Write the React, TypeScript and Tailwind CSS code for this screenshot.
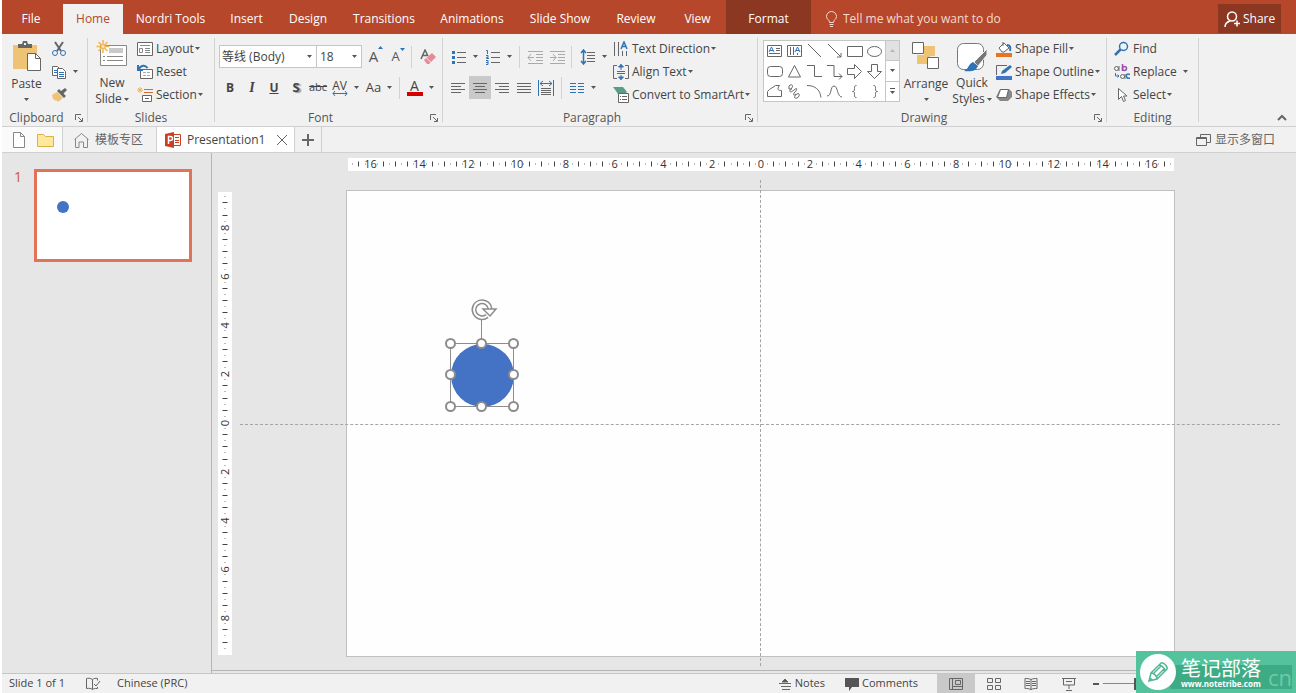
import type { ReactNode } from "react";

const tabs = [
  { name: "File", style: "w-[58px] mr-[3px] text-white" },
  { name: "Home", style: "w-[60px] bg-[#f1f1f1] text-[#b7472a]" },
  { name: "Nordri Tools", style: "w-[95px] text-white" },
  { name: "Insert", style: "w-[57px] text-white" },
  { name: "Design", style: "w-[66px] text-white" },
  { name: "Transitions", style: "w-[86px] text-white" },
  { name: "Animations", style: "w-[90px] text-white" },
  { name: "Slide Show", style: "w-[86px] text-white" },
  { name: "Review", style: "w-[66px] text-white" },
  { name: "View", style: "w-[57px] text-white" },
];

function Icon({ w = 16, h = 16, children }: { w?: number; h?: number; children: ReactNode }) {
  return (
    <svg
      width={w}
      height={h}
      viewBox={`0 0 ${w} ${h}`}
      fill="none"
      stroke="#666"
      className="shrink-0"
      aria-hidden="true"
    >
      {children}
    </svg>
  );
}

function Caret() {
  return (
    <svg width="5" height="3" viewBox="0 0 5 3" className="shrink-0 fill-[#555]" aria-hidden="true">
      <path d="M0 0h5L2.500 3z" />
    </svg>
  );
}

function Launcher({ label }: { label: string }) {
  return (
    <button type="button" aria-label={label} className="flex w-4 justify-center">
      <Icon w={8} h={8}>
        <path d="M.5 6V.5H6M3 3l4 4M7.500 4v3.500H4" />
      </Icon>
    </button>
  );
}

function Group({
  name,
  width,
  launcher = false,
  children,
}: {
  name: string;
  width: string;
  launcher?: boolean;
  children: ReactNode;
}) {
  return (
    <section aria-label={name} className={`flex shrink-0 ${width}`}>
      <div className="flex min-w-0 flex-1 flex-col">
        <div className="flex h-[76px] pt-[3px]">{children}</div>
        <div className="flex h-4 items-center">
          <span className="flex-1 text-center text-[#555]">{name}</span>
          {launcher && <Launcher label={`${name} settings`} />}
        </div>
      </div>
      <div className="my-1 w-px bg-[#d2d2d2]" />
    </section>
  );
}

function Row({ icon, label, menu = false }: { icon: ReactNode; label: string; menu?: boolean }) {
  return (
    <button type="button" className="flex h-[23px] items-center gap-[3px] whitespace-nowrap">
      {icon}
      <span className="flex items-center gap-px">
        {label}
        {menu && <Caret />}
      </span>
    </button>
  );
}

function Tool({
  label,
  width = "w-[22px]",
  active = false,
  children,
}: {
  label: string;
  width?: string;
  active?: boolean;
  children: ReactNode;
}) {
  return (
    <button
      type="button"
      aria-label={label}
      className={`flex h-[23px] shrink-0 items-center justify-center gap-1.5 ${width} ${active ? "bg-[#c9c9c9]" : ""}`}
    >
      {children}
    </button>
  );
}

function Divider() {
  return <div className="h-[22px] w-px shrink-0 bg-[#d2d2d2]" />;
}

function Lines({ rows }: { rows: number[][] }) {
  return (
    <Icon>
      {rows.map(([a, b], i) => (
        <path key={i} d={`M${a} ${3.5 + i * 3}H${b}`} />
      ))}
    </Icon>
  );
}

function Clipboard() {
  return (
    <Group name="Clipboard" width="w-[86px]" launcher>
      <button type="button" className="flex w-[49px] flex-col items-center pt-1">
        <Icon w={30} h={32}>
          <path d="M1 4h24v24H1z" fill="#eec373" stroke="none" />
          <path d="M6 3h4l1-3h4l1 3h4v4H6z" fill="#666" stroke="none" />
          <path d="M12 2h2v2h-2z" fill="#f1f1f1" stroke="none" />
          <path d="M15.500 12.500h8l5 5v12h-13z" fill="#fff" />
          <path d="M23.500 12.500v5h5" />
        </Icon>
        <span className="mt-[3px] leading-[16px]">Paste</span>
        <span className="mt-1.5"><Caret /></span>
      </button>
      <div className="flex flex-col">
        <Tool label="Cut" width="w-4">
          <Icon>
            <path d="M4 1l6 9M12 1L6 10" strokeWidth="2" />
            <circle cx="4" cy="12" r="2.500" stroke="#2f73b5" />
            <circle cx="12" cy="12" r="2.500" stroke="#2f73b5" />
          </Icon>
        </Tool>
        <Tool label="Copy" width="w-[27px]">
          <Icon>
            <path d="M1.500 2.500h5l3 3v6h-8z" fill="#fff" />
            <path d="M3 6.500h3M3 8.500h3" stroke="#2f73b5" />
            <path d="M6.500 4.500h5l3 3v7h-8z" fill="#fff" />
            <path d="M8 8.500h5M8 10.500h5M8 12.500h5" stroke="#2f73b5" />
          </Icon>
          <Caret />
        </Tool>
        <Tool label="Format painter" width="w-4">
          <Icon>
            <path d="M1 8l5-3 6 6-5 4-2-2-1 1-1-2-1 0z" fill="#eec373" stroke="none" />
            <path d="M6 4l7 7 2-2-2.500-2.500L16 3l-2-2-4 3-2-2z" fill="#666" stroke="none" />
          </Icon>
        </Tool>
      </div>
    </Group>
  );
}

function Slides() {
  return (
    <Group name="Slides" width="w-[127px]">
      <button type="button" className="flex w-12 flex-col items-center pt-[3px]">
        <Icon w={32} h={32}>
          <path d="M4.500 5.500h26v20h-26z" fill="#fff" stroke="#888" />
          <path d="M13 8h14v5H13z" fill="#c9c9c9" stroke="none" />
          <path d="M7 16.500h2m2 0h16M7 20.500h2m2 0h16" stroke="#888" />
          <path d="M7 0v13M.5 6.500h13M2.500 2l9 9M11.500 2l-9 9" stroke="#f0b654" strokeWidth="1.500" />
          <circle cx="7" cy="6.500" r="2" fill="#f9e3b8" stroke="#f0b654" />
        </Icon>
        <span className="mt-[3px] leading-[16px]">New</span>
        <span className="flex items-center gap-0.5 leading-[16px]">Slide <Caret /></span>
      </button>
      <div className="ml-px flex flex-col">
        <Row
          label="Layout"
          menu
          icon={
            <Icon>
              <path d="M.5 1.500h15v13H.5z" fill="#fff" />
              <path d="M3 4.500h10M8 7.500h5M8 9.500h5M8 11.500h5M2.500 7.500h3v4h-3z" stroke="#888" />
            </Icon>
          }
        />
        <Row
          label="Reset"
          icon={
            <Icon>
              <path d="M3.500 5.500h12v9h-12z" fill="#fff" />
              <path d="M6 8.500h3M10 8.500h3M6 11.500h3M10 11.500h3" stroke="#aaa" />
              <path d="M1 1v5h5M1.500 5.500C4 1 8 .5 10.500 4" stroke="#2f73b5" strokeWidth="2" />
            </Icon>
          }
        />
        <Row
          label="Section"
          menu
          icon={
            <Icon>
              <path d="M3 0v6M0 3h6M1 1l4 4M5 1L1 5" stroke="#f0b654" />
              <path d="M7 2.500h9M7 5.500h9" stroke="#d06b3c" />
              <path d="M5.500 8.500h9v6h-9zM8 11.500h4" fill="#fff" />
            </Icon>
          }
        />
      </div>
    </Group>
  );
}

function FontGroup() {
  return (
    <Group name="Font" width="w-[228px]" launcher>
      <div className="flex flex-1 flex-col pl-1 pt-2">
        <div className="flex items-center">
          <div className="flex h-[23px] w-[98px] items-center border border-[#c6c6c6] bg-white pr-1">
            <input aria-label="Font name" defaultValue="等线 (Body)" className="w-0 flex-1 pl-0.5 outline-none" />
            <Caret />
          </div>
          <div className="-ml-px flex h-[23px] w-[46px] items-center border border-[#c6c6c6] bg-white pr-1">
            <input aria-label="Font size" defaultValue="18" className="w-0 flex-1 pl-[3px] outline-none" />
            <Caret />
          </div>
          <Tool label="Increase font size" width="ml-[3px] w-[22px]">
            <span className="flex text-[15px] text-[#555]">A<Icon w={5} h={5}><path d="M0 4h5L2.500 1z" fill="#2f73b5" stroke="none" /></Icon></span>
          </Tool>
          <Tool label="Decrease font size">
            <span className="flex text-[13px] text-[#555]">A<Icon w={5} h={5}><path d="M0 1h5L2.500 4z" fill="#2f73b5" stroke="none" /></Icon></span>
          </Tool>
          <div className="ml-[2px]"><Divider /></div>
          <Tool label="Clear formatting" width="ml-[5px] w-[22px]">
            <Icon>
              <path d="M1 10L5 1l3 6M2.500 6.500h5" strokeWidth="1.500" />
              <path d="M4 11l8-7 4 4-7 7H7z" fill="#e58b98" stroke="none" />
              <path d="M6.500 9l4.500 4.500" stroke="#f1f1f1" />
            </Icon>
          </Tool>
        </div>
        <div className="mt-2 flex items-center text-[#444]">
          <Tool label="Bold"><b>B</b></Tool>
          <Tool label="Italic"><i className="font-['Liberation_Serif'] text-[14px] font-bold">I</i></Tool>
          <Tool label="Underline"><b className="underline">U</b></Tool>
          <Tool label="Shadow"><b className="text-[13px] [text-shadow:2px_1px_1px_#999]">S</b></Tool>
          <Tool label="Strikethrough"><s className="text-[11px]">abc</s></Tool>
          <Tool label="Character spacing" width="w-[32px]">
            <span className="flex flex-col items-center leading-[11px]">
              AV
              <Icon w={16} h={5}><path d="M1 2.500h14M3 0L1 2.500 3 5M13 0l2 2.500L13 5" stroke="#2f73b5" /></Icon>
            </span>
            <Caret />
          </Tool>
          <Tool label="Change case" width="w-[36px]">
            <span className="text-[13px]">Aa</span>
            <Caret />
          </Tool>
          <div className="ml-[2px]"><Divider /></div>
          <Tool label="Font color" width="ml-[5px] w-[30px]">
            <span className="flex w-4 flex-col items-center text-[14px] leading-[13px]">
              A<span className="h-1 w-4 bg-[#d40000]" />
            </span>
            <Caret />
          </Tool>
        </div>
      </div>
    </Group>
  );
}

function Paragraph() {
  return (
    <Group name="Paragraph" width="w-[315px]" launcher>
      <div className="flex w-[168px] flex-col pl-1 pt-2">
        <div className="flex items-center">
          <Tool label="Bullets" width="w-[34px]">
            <Icon>
              <path d="M6 3.500h9M6 8.500h9M6 13.500h9" />
              <path d="M1 2h3v3H1zM1 7h3v3H1zM1 12h3v3H1z" fill="#2f73b5" stroke="none" />
            </Icon>
            <Caret />
          </Tool>
          <Tool label="Numbering" width="w-[34px]">
            <Icon>
              <path d="M6 3.500h9M6 8.500h9M6 13.500h9" />
              <path d="M1 1.500h1.500V5M1 6.500h2v2H1.500v1H4M1 11.500h2v4H1M1 13.500h2" stroke="#2f73b5" />
            </Icon>
            <Caret />
          </Tool>
          <div className="ml-1"><Divider /></div>
          <Tool label="Decrease indent" width="ml-1 w-[22px]">
            <Icon>
              <path d="M1 2.500h15M9 5.500h7M9 8.500h7M9 11.500h7M1 14.500h15M1 8.500h6M4 5L1 8.500 4 12" stroke="#aaa" />
            </Icon>
          </Tool>
          <Tool label="Increase indent">
            <Icon>
              <path d="M1 2.500h15M9 5.500h7M9 8.500h7M9 11.500h7M1 14.500h15M1 8.500h6M4 5l3 3.500L4 12" stroke="#aaa" />
            </Icon>
          </Tool>
          <div className="ml-[3px]"><Divider /></div>
          <Tool label="Line spacing" width="ml-1 w-[34px]">
            <Icon>
              <path d="M7 3.500h8M7 6.500h8M7 9.500h8M7 12.500h8" />
              <path d="M3.500 1v14M1 4l2.500-3L6 4M1 12l2.500 3L6 12" stroke="#2f73b5" strokeWidth="1.500" />
            </Icon>
            <Caret />
          </Tool>
        </div>
        <div className="mt-2 flex items-center">
          <Tool label="Align left"><Lines rows={[[1, 15], [1, 11], [1, 15], [1, 11]]} /></Tool>
          <Tool label="Center" active><Lines rows={[[1, 15], [3, 13], [1, 15], [3, 13]]} /></Tool>
          <Tool label="Align right"><Lines rows={[[1, 15], [5, 15], [1, 15], [5, 15]]} /></Tool>
          <Tool label="Justify"><Lines rows={[[1, 15], [1, 15], [1, 15], [1, 15]]} /></Tool>
          <Tool label="Distribute">
            <Icon>
              <path d="M.5 0v16M15.500 0v16M2 3.500h12M5 1L2 3.500 5 6M11 1l3 2.500L11 6" stroke="#2f73b5" />
              <path d="M3 8.500h10M3 10.500h10M3 12.500h10M3 14.500h10" />
            </Icon>
          </Tool>
          <div className="ml-1"><Divider /></div>
          <Tool label="Columns" width="ml-[3px] w-[34px]">
            <Icon>
              <path d="M1 3.500h6M9 3.500h6M1 6.500h6M9 6.500h6M1 9.500h6M9 9.500h6M1 12.500h6M9 12.500h6" stroke="#2f73b5" />
            </Icon>
            <Caret />
          </Tool>
        </div>
      </div>
      <div className="ml-[2px] flex flex-col">
        <Row
          label="Text Direction"
          menu
          icon={
            <Icon>
              <path d="M1.500 1v14M5.500 1v14M9.500 10v5M13.500 10v5" />
              <path d="M8 8l3-7 3 7M9 5.500h4" stroke="#2f73b5" strokeWidth="1.500" />
            </Icon>
          }
        />
        <Row
          label="Align Text"
          menu
          icon={
            <Icon>
              <path d="M4 1.500H.5v13H4M12 1.500h3.500v13H12M4 7.500h8M4 9.500h8" />
              <path d="M8 0v6M5.500 3L8 .5 10.500 3zM8 11v5M5.500 13L8 15.500 10.500 13z" stroke="#2f73b5" fill="#2f73b5" />
            </Icon>
          }
        />
        <Row
          label="Convert to SmartArt"
          menu
          icon={
            <Icon>
              <path d="M0 0h10l4 5-2 2H5L3 4z" fill="#569f86" stroke="none" />
              <path d="M5.500 6.500h10v9h-10z" fill="#fff" />
              <path d="M7 9.500h1M7 12.500h1M9 9.500h5M9 12.500h5" />
            </Icon>
          }
        />
      </div>
    </Group>
  );
}

const shapes: { name: string; art: ReactNode }[] = [
  { name: "Text box", art: <><path d="M1.500 2.500h14v11h-14zM10 5.500h4M10 7.500h4M3 10.500h11" /><path d="M3 9l2.500-5L8 9M4 7.500h3" stroke="#2f73b5" /></> },
  { name: "Vertical text box", art: <><path d="M1.500 2.500h14v11h-14zM4.500 4v8M7.500 4v8" /><path d="M9 9l2.500-5L14 9M10 7.500h3M11.500 10v2" stroke="#2f73b5" /></> },
  { name: "Line", art: <path d="M2 1l13 13" /> },
  { name: "Arrow", art: <path d="M2 1l13 13M15 10v4h-4" /> },
  { name: "Rectangle", art: <path d="M1.500 3.500h15v10h-15z" /> },
  { name: "Oval", art: <ellipse cx="8.500" cy="8.500" rx="7" ry="5" /> },
  { name: "Rounded rectangle", art: <rect x="1.500" y="3.500" width="15" height="10" rx="3" /> },
  { name: "Triangle", art: <path d="M8.500 2.500l6 11.500h-12z" /> },
  { name: "Elbow connector", art: <path d="M1 2.500h7.500v11H16" /> },
  { name: "Elbow arrow", art: <path d="M1 2.500h7v11h8M13 10.500l3 3-3 3" /> },
  { name: "Right arrow", art: <path d="M1.500 5.500h7v-4l7 7-7 7v-4h-7z" /> },
  { name: "Down arrow", art: <path d="M5.500 1.500v7h-4l7 7 7-7h-4v-7z" /> },
  { name: "Freeform", art: <path d="M3.500 6.500l6-4h4c-3 4-1 5 2 5v6h-14v-5z" /> },
  { name: "Scribble", art: <path d="M3 3c3-3 5 0 2 3s0 4 3 1 4-1 1 2-1 4 2 2 3 3 0 4-3-1-1-4M3 3v3h3" /> },
  { name: "Arc", art: <path d="M1 2.500c8 0 13 4 14 12" /> },
  { name: "Curve", art: <path d="M1 13c5 0 3-10 7-10s3 11 8 11" /> },
  { name: "Left brace", art: <path d="M10.500 2.500c-2 0-2 1-2 3s0 3-2 3c2 0 2 1 2 3s0 3 2 3" /> },
  { name: "Right brace", art: <path d="M7.500 2.500c2 0 2 1 2 3s0 3 2 3c-2 0-2 1-2 3s0 3-2 3" /> },
];

function Drawing() {
  return (
    <Group name="Drawing" width="w-[349px]" launcher>
      <div className="ml-[5px] mt-[3px] flex h-[62px] w-[137px] border border-[#c6c6c6] bg-white">
        <div className="grid flex-1 grid-cols-6 pr-px">
          {shapes.map((shape) => (
            <button key={shape.name} type="button" aria-label={shape.name} className="flex items-center justify-center">
              <Icon w={17} h={17}>{shape.art}</Icon>
            </button>
          ))}
        </div>
        <div className="flex w-[14px] flex-col divide-y divide-[#c6c6c6] border-l border-[#c6c6c6]">
          <button type="button" aria-label="Previous shapes" className="flex flex-1 items-center justify-center bg-[#e1e1e1]">
            <span className="rotate-180 opacity-30"><Caret /></span>
          </button>
          <button type="button" aria-label="Next shapes" className="flex flex-1 items-center justify-center"><Caret /></button>
          <button type="button" aria-label="All shapes" className="flex flex-1 flex-col items-center justify-center gap-0.5">
            <span className="h-px w-[5px] bg-[#555]" />
            <Caret />
          </button>
        </div>
      </div>
      <button type="button" className="ml-[3px] flex w-[46px] flex-col items-center pt-1">
        <Icon w={28} h={32}>
          <path d="M12 5h11v10h-5v8H5v-9h7z" fill="#eec373" stroke="none" />
          <path d="M.5 1.500h11v11H.5zM15.500 16.500h11v11h-11z" fill="#fff" />
        </Icon>
        <span className="mt-[3px] leading-[16px]">Arrange</span>
        <span className="mt-1.5"><Caret /></span>
      </button>
      <button type="button" className="ml-px flex w-[44px] flex-col items-center pt-1">
        <Icon w={32} h={32}>
          <rect x="1.500" y="2.500" width="26" height="26" rx="6" fill="#fff" stroke="#777" />
          <path d="M31 8v6l-9 11-4-4z" fill="#777" stroke="#f1f1f1" />
          <path d="M17 21l5 4c-2 5-7 6-14 5 5-2 4-7 9-9z" fill="#2f73b5" stroke="none" />
        </Icon>
        <span className="mt-0.5 leading-[16px]">Quick</span>
        <span className="flex items-center gap-0.5 leading-[16px]">Styles <Caret /></span>
      </button>
      <div className="ml-[2px] flex flex-col">
        <Row
          label="Shape Fill"
          menu
          icon={
            <Icon>
              <path d="M0 12h16v4H0z" fill="#e67424" stroke="none" />
              <path d="M3 7l5-5 5 5-5 4H6zM7 5V1" fill="#fff" />
              <path d="M11 4c3 0 4 2 3 6" stroke="#2f73b5" strokeWidth="2" />
            </Icon>
          }
        />
        <Row
          label="Shape Outline"
          menu
          icon={
            <Icon>
              <path d="M0 12h16v4H0z" fill="#4472c4" stroke="none" />
              <path d="M11 1.500H.5V11" />
              <path d="M5 10l1-3 8-6 2 2-7 6z" fill="#2f73b5" stroke="none" />
            </Icon>
          }
        />
        <Row
          label="Shape Effects"
          menu
          icon={
            <Icon>
              <path d="M4 2h9l3 3v5l-4 4H4l-4-4z" fill="#888" stroke="none" />
              <path d="M4.500 2.500h8l-2 8h-9z" fill="#fff" />
            </Icon>
          }
        />
      </div>
    </Group>
  );
}

function Editing() {
  return (
    <Group name="Editing" width="w-[92px]">
      <div className="ml-[7px] flex flex-1 flex-col">
        <Row
          label="Find"
          icon={
            <Icon>
              <circle cx="9.500" cy="5.500" r="4" stroke="#2f73b5" strokeWidth="1.500" />
              <path d="M6.500 8.500L1 14" stroke="#2f73b5" strokeWidth="2.500" />
            </Icon>
          }
        />
        <div className="flex items-center">
          <Row
            label="Replace"
            icon={
              <Icon>
                <circle cx="2.500" cy="4.500" r="2" />
                <path d="M5 2v5" />
                <path d="M8.500 0v7" stroke="#9b4fb5" strokeWidth="1.500" />
                <circle cx="10.500" cy="4.500" r="2" stroke="#9b4fb5" strokeWidth="1.500" />
                <path d="M1.500 9v3H5M3.500 10.500L5 12l-1.500 1.500" stroke="#2f73b5" />
                <circle cx="8.500" cy="12.500" r="2" />
                <path d="M11 10v5" />
                <path d="M16 10.500c-3-1-4 0-3.500 2s2 2 3.500 1.500" stroke="#2f73b5" strokeWidth="1.500" />
              </Icon>
            }
          />
          <button type="button" aria-label="Replace options" className="mr-2.5 ml-auto"><Caret /></button>
        </div>
        <Row
          label="Select"
          menu
          icon={
            <Icon>
              <path d="M4.500 1.500v11l3-3 2 5 2-1-2-4.500h3.500z" fill="#fff" />
            </Icon>
          }
        />
      </div>
    </Group>
  );
}

function DocumentTabs() {
  return (
    <nav aria-label="Open documents" className="flex h-[26px] shrink-0 items-center border-b border-[#d0d0d0] bg-[#f1f1f1] text-[#666]">
      <div className="flex h-full w-[61px] items-center gap-2.5 border-r border-[#d0d0d0] bg-[#fafafa] pl-[9px]">
        <button type="button" aria-label="New document">
          <Icon><path d="M2.500.5h7l4 4v11h-11zM9.500.5v4h4" fill="#fff" stroke="#888" /></Icon>
        </button>
        <button type="button" aria-label="Open folder">
          <Icon w={17}><path d="M.5 2.500h6l2 2h8v10H.5z" fill="#ffe79b" stroke="#d9b24a" /></Icon>
        </button>
      </div>
      <a href="#templates" className="flex h-full w-[94px] items-center gap-1.5 border-r border-[#d0d0d0] pl-2.5">
        <Icon><path d="M1.500 7.500l7-6 7 6M2.500 7v8.500h3.500v-5.500h4.500v5.500h4V7" stroke="#888" /></Icon>
        模板专区
      </a>
      <div className="flex h-full w-[138px] items-center border-r border-[#d0d0d0] bg-white pl-2">
        <Icon>
          <path d="M0 2l9-2v16l-9-2z" fill="#c8401f" stroke="none" />
          <path d="M9 2.500h6.500v11H9M10 5.500h4M10 8.500h4M10 10.500h4" stroke="#c8401f" />
          <path d="M3.500 12V4.500h2a2 2 0 010 4h-2" stroke="#fff" strokeWidth="1.500" />
        </Icon>
        <span className="ml-1.5 text-[#444]">Presentation1</span>
        <button type="button" aria-label="Close Presentation1" className="ml-auto mr-1.5">
          <Icon w={12} h={12}><path d="M1 1l10 10M11 1L1 11" /></Icon>
        </button>
      </div>
      <button type="button" aria-label="New tab" className="flex h-full w-[27px] items-center justify-center border-r border-[#d0d0d0]">
        <Icon w={12} h={12}><path d="M6 0v12M0 6h12" strokeWidth="2" /></Icon>
      </button>
      <button type="button" className="mr-[21px] ml-auto flex items-center gap-1">
        <Icon w={15}><path d="M4.500 5V2.500h10v8H11M.5 5.500h10v8H.5zM.5 6.500h10" /></Icon>
        显示多窗口
      </button>
    </nav>
  );
}

// half-centimetre ticks with dots between them, even numbers counted out from the middle
function Ruler({ length, origin, max }: { length: number; origin: number; max: number }) {
  const marks = [];
  for (let i = -max * 4; i <= max * 4; i++) {
    const at = origin + i * 6.1;
    if (at < 3 || at > length - 3) continue;
    if (i % 8 === 0) {
      marks.push(
        <text key={i} x={at} y="10" textAnchor="middle" fontSize="11" fill="#333">
          {Math.abs(i / 4)}
        </text>,
      );
    } else {
      const r = i % 2 === 0 ? 2.5 : 0.5;
      marks.push(<path key={i} d={`M${Math.round(at) + 0.5} ${6 - r}V${6 + r}`} stroke={i % 2 === 0 ? "#444" : "#777"} />);
    }
  }
  return (
    <svg width={length} height="13" className="shrink-0 bg-white" aria-hidden="true">
      {marks}
    </svg>
  );
}

function SelectedCircle() {
  const handles = [[6, 6], [37, 6], [69, 6], [6, 37], [69, 37], [6, 69], [37, 69], [69, 69]];
  return (
    <svg width="76" height="114" viewBox="0 -38 76 114" className="absolute left-[97px] top-[108px]" role="img" aria-label="Selected circle">
      <circle cx="38.500" cy="38.500" r="31.500" fill="#4472c4" />
      <path d="M6.500 6.500h63v63h-63zM37.500 6V-20" fill="none" stroke="#8c8c8c" />
      {handles.map(([x, y]) => (
        <circle key={`${x}-${y}`} cx={x + 0.5} cy={y + 0.5} r="4.500" fill="#fff" stroke="#8c8c8c" strokeWidth="2" />
      ))}
      <path d="M46-28a8 8 0 10-3 7" fill="none" stroke="#8c8c8c" strokeWidth="5" />
      <path d="M46-28a8 8 0 10-3 7" fill="none" stroke="#fff" strokeWidth="2" />
      <path d="M39-28h13l-6 7z" fill="#fff" stroke="#8c8c8c" strokeWidth="1.500" />
    </svg>
  );
}

function Workspace() {
  return (
    <main className="flex min-h-0 flex-1 bg-[#e6e6e6]">
      <aside className="flex w-[210px] shrink-0 gap-3 border-r border-[#b5b5b5] pl-3 pt-4">
        <span className="w-2 text-[14px] leading-[16px] text-[#d2553a]">1</span>
        <button type="button" aria-label="Slide 1" className="flex h-[93px] w-[158px] items-start border-[3px] border-[#e0735a] bg-white pt-[29px] pl-5">
          <span className="size-3 rounded-full bg-[#4472c4]" />
        </button>
      </aside>
      <div className="mb-[2px] flex flex-1 border-b border-[#b5b5b5] pl-1.5">
        <div className="flex w-[14px] items-start pt-[39px]">
          <div className="flex h-[463px] w-[14px] items-center justify-center bg-white">
            <div className="shrink-0 -rotate-90"><Ruler length={463} origin={232} max={10} /></div>
          </div>
        </div>
        <div className="relative mr-[7px] flex flex-1 flex-col items-center pt-[5px]">
          <Ruler length={826} origin={413} max={17} />
          <div className="relative mt-[19px] h-[467px] w-[829px] border border-[#c0c0c0] bg-[#fefefe]">
            <SelectedCircle />
          </div>
          <div className="absolute bottom-[4px] top-[27px] left-1/2 -ml-px border-l border-dashed border-[#a5a5a5]" />
          <div className="absolute top-[271px] right-[9px] left-2 border-t border-dashed border-[#a5a5a5]" />
        </div>
      </div>
    </main>
  );
}

function StatusBar() {
  return (
    <footer className="flex h-5 shrink-0 items-center border-t border-[#c6c6c6] bg-[#f1f1f1] text-[11px]">
      <span className="ml-[7px]">Slide 1 of 1</span>
      <button type="button" aria-label="Spelling" className="ml-5">
        <Icon><path d="M7.500 3.500C5.500 2 3 2 1.500 2.500v10c3-.5 4.500 0 6 1 1-1 2-1 5-1V11M7.500 3.500v10M7.500 3.500c1-1 3-1.500 5-1v2M9 8l2 2 4-5" /></Icon>
      </button>
      <span className="ml-4">Chinese (PRC)</span>
      <div className="ml-auto mr-40 flex h-full items-center">
        <button type="button" className="flex items-center gap-1">
          <Icon w={12} h={12}><path d="M3 4l3-3 3 3zM0 5.500h12M2 8.500h10M3 11.500h8" fill="#555" /></Icon>
          Notes
        </button>
        <button type="button" className="ml-5 flex items-center gap-[3px]">
          <Icon w={14} h={14}><path d="M0 1h14v9H7l-3 4v-4H0z" fill="#555" stroke="none" /></Icon>
          Comments
        </button>
        <button type="button" aria-label="Normal view" className="ml-[19px] flex h-full w-[38px] items-center justify-center bg-[#c9c9c9]">
          <Icon><path d="M1.500 2.500h13v11h-13zM4.500 3v10M7.500 4.500h5v4h-5zM5 10.500h9" /></Icon>
        </button>
        <button type="button" aria-label="Slide sorter" className="ml-[11px]">
          <Icon><path d="M1.500 2.500h5v4h-5zM9.500 2.500h5v4h-5zM1.500 9.500h5v4h-5zM9.500 9.500h5v4h-5z" /></Icon>
        </button>
        <button type="button" aria-label="Reading view" className="ml-[21px]">
          <Icon><path d="M8 3.500c-2-1-4-1-6-1v10c2 0 4 0 6 1 2-1 4-1 6-1v-10c-2 0-4 0-6 1zM8 3v11M3 5.500h4M3 7.500h4M3 9.500h4M9 5.500h4M9 7.500h4M9 9.500h4" /></Icon>
        </button>
        <button type="button" aria-label="Slide show" className="ml-[22px]">
          <Icon><path d="M1 2.500h14M2.500 3v6h11V3M8 9v4M5 14.500h6M5 5.500h6" /></Icon>
        </button>
        <span className="ml-4 h-[2px] w-1.5 bg-[#555]" />
        <span className="ml-1 h-px w-[31px] bg-[#888]" />
        <span className="h-3 w-[2px] bg-[#555]" />
      </div>
    </footer>
  );
}

function Badge() {
  return (
    <div className="absolute right-0 bottom-0 flex h-[42px] w-40 items-center bg-[#53c39e] pl-1">
      <div className="absolute right-1 bottom-1 flex h-6 w-[122px] items-center justify-end bg-[#3dac84] text-[22px] leading-none text-[#6fcaab]">cn</div>
      <div className="relative flex size-9 items-center justify-center rounded-full bg-white">
        <svg width="22" height="22" viewBox="0 0 22 22" fill="none" stroke="#53b796" strokeWidth="1.500" aria-hidden="true">
          <path d="M2 20l2-8L14 2c2-1 7 3 6 6L10 18zM4 12c3 0 6 3 6 6M12 4c2 0 6 3 6 6M6 13l8-8M9 16l8-8M2 20l1-3 2 2z" />
        </svg>
      </div>
      <div className="relative ml-[5px] flex flex-col text-white">
        <span className="text-[20px] leading-[23px]">笔记部落</span>
        <span className="text-[8px] leading-[8px] font-bold">www.notetribe.com</span>
      </div>
    </div>
  );
}

export default function App() {
  return (
    <div className="relative flex h-screen min-h-[640px] flex-col overflow-hidden bg-white pl-0.5 font-['Open_Sans','Noto_Sans_CJK_SC',sans-serif] text-[12px] text-[#444]">
      <header className="flex h-[34px] shrink-0 items-end bg-[#b7472a]">
        {tabs.map((tab) => (
          <button key={tab.name} type="button" className={`h-[30px] shrink-0 whitespace-nowrap ${tab.style}`}>
            {tab.name}
          </button>
        ))}
        <button type="button" className="h-full w-[85px] bg-[#8c3721] pt-1 text-white">Format</button>
        <label className="ml-[15px] flex h-[30px] flex-1 items-center gap-1.5 text-[#f5d9d0]">
          <Icon w={11} h={16}>
            <path d="M3.500 11.500c0-3-3-3-3-6a5 5 0 0110 0c0 3-3 3-3 6zM3.500 13.500h4M4 15.500h3" stroke="#f5d9d0" />
          </Icon>
          <input placeholder="Tell me what you want to do" className="w-full outline-none placeholder:text-[#f5d9d0]" />
        </label>
        <button type="button" className="mr-[15px] mb-px flex h-[29px] w-[63px] items-center gap-[3px] bg-[#8c3721] pl-1.5 text-white">
          <Icon>
            <circle cx="8" cy="5.500" r="4.500" stroke="#fff" strokeWidth="1.500" />
            <path d="M1 16c0-4 2-5 5-6M10 12.500h6M13 9.500v6" stroke="#fff" strokeWidth="1.500" />
          </Icon>
          Share
        </button>
      </header>
      <div className="flex h-[93px] shrink-0 border-b border-[#d0d0d0] bg-[#f1f1f1]">
        <Clipboard />
        <Slides />
        <FontGroup />
        <Paragraph />
        <Drawing />
        <Editing />
        <button type="button" aria-label="Collapse ribbon" className="mt-auto mr-[9px] mb-1 ml-auto">
          <Icon w={10} h={8}><path d="M1 6l4-4 4 4" strokeWidth="2" /></Icon>
        </button>
      </div>
      <DocumentTabs />
      <Workspace />
      <StatusBar />
      <Badge />
    </div>
  );
}
